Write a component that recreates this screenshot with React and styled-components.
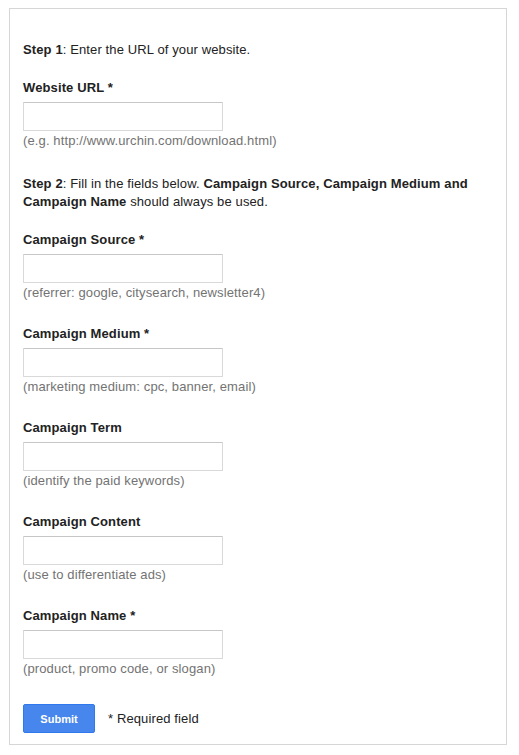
import React from 'react';
import styled, { createGlobalStyle } from 'styled-components';

const GlobalStyle = createGlobalStyle`
  html, body {
    margin: 0;
    padding: 0;
    background: #fff;
  }
  body {
    font-family: "Liberation Sans", Arial, sans-serif;
    font-size: 13px;
    letter-spacing: 0.12px;
    color: #222;
  }
`;

const Panel = styled.form`
  box-sizing: border-box;
  width: 498px;
  height: 737px;
  margin: 8px 0 0 9px;
  padding: 32px 13px 10px 13px;
  border: 1px solid #d6d6d6;
  line-height: 18px;
`;

const Step = styled.p`
  margin: ${(p) => p.$top || 0}px 0 0 0;
  b { font-weight: bold; }
`;

const Field = styled.div`
  margin-top: ${(p) => p.$top}px;
  display: flex;
  flex-direction: column;
  align-items: flex-start;
`;

const Label = styled.label`
  font-weight: bold;
  margin-bottom: 5px;
`;

const Input = styled.input`
  box-sizing: border-box;
  width: 200px;
  height: 29px;
  margin: 0;
  padding: 0 8px;
  border: 1px solid #d9d9d9;
  border-top-color: #c6c6c6;
  border-radius: 1px;
  font: inherit;
  outline: none;
`;

const Hint = styled.div`
  margin-top: 1px;
  color: #737373;
`;

const Actions = styled.div`
  margin-top: 26px;
  display: flex;
  align-items: center;
  gap: 13px;
`;

const Button = styled.button`
  box-sizing: border-box;
  width: 72px;
  height: 29px;
  border: 1px solid #3079ed;
  border-radius: 2px;
  background: #4787ed;
  color: #fff;
  font-family: "Liberation Sans", Arial, sans-serif;
  font-size: 11px;
  font-weight: bold;
  padding: 0;
  cursor: pointer;
`;

const fields = [
  { label: 'Campaign Source *', hint: '(referrer: google, citysearch, newsletter4)' },
  { label: 'Campaign Medium *', hint: '(marketing medium: cpc, banner, email)' },
  { label: 'Campaign Term', hint: '(identify the paid keywords)' },
  { label: 'Campaign Content', hint: '(use to differentiate ads)' },
  { label: 'Campaign Name *', hint: '(product, promo code, or slogan)' },
];

export default function App() {
  return (
    <>
      <GlobalStyle />
      <Panel onSubmit={(e) => e.preventDefault()}>
        <Step>
          <b>Step 1</b>: Enter the URL of your website.
        </Step>
        <Field $top={20}>
          <Label>Website URL *</Label>
          <Input type="text" />
          <Hint>(e.g. http://www.urchin.com/download.html)</Hint>
        </Field>
        <Step $top={25}>
          <b>Step 2</b>: Fill in the fields below. <b>Campaign Source, Campaign Medium and Campaign Name</b> should always be used.
        </Step>
        {fields.map((f, i) => (
          <Field key={f.label} $top={i === 0 ? 20 : 23}>
            <Label>{f.label}</Label>
            <Input type="text" />
            <Hint>{f.hint}</Hint>
          </Field>
        ))}
        <Actions>
          <Button type="submit">Submit</Button>
          <span>* Required field</span>
        </Actions>
      </Panel>
    </>
  );
}
